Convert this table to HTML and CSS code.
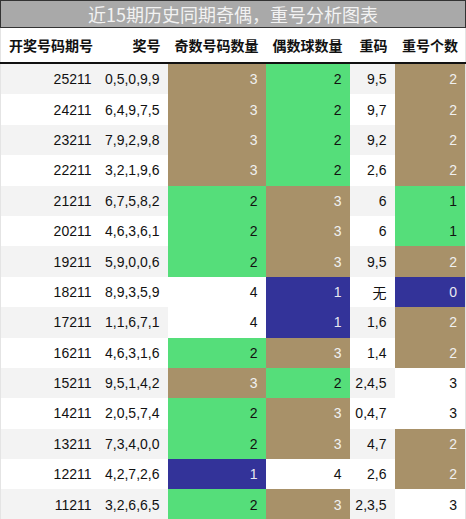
FILE: index.html
```html
<!DOCTYPE html>
<html lang="zh-CN">
<head>
    <meta charset="UTF-8">
    <meta name="viewport" content="width=device-width, initial-scale=1.0">
    <title>近15期历史同期奇偶，重号分析图表</title>
    <link rel="stylesheet" href="styles.css">
</head>
<body>

<div class="title">近15期历史同期奇偶，重号分析图表</div>

<table class="chart">
    <colgroup>
        <col class="c-issue">
        <col class="c-nums">
        <col class="c-odd">
        <col class="c-even">
        <col class="c-rep">
        <col class="c-cnt">
    </colgroup>
    <thead>
        <tr>
            <th>开奖号码期号</th>
            <th>奖号</th>
            <th>奇数号码数量</th>
            <th>偶数球数量</th>
            <th>重码</th>
            <th>重号个数</th>
        </tr>
    </thead>
    <tbody>
        <tr><td>25211</td><td>0,5,0,9,9</td><td class="tan">3</td><td class="green">2</td><td>9,5</td><td class="tan">2</td></tr>
        <tr><td>24211</td><td>6,4,9,7,5</td><td class="tan">3</td><td class="green">2</td><td>9,7</td><td class="tan">2</td></tr>
        <tr><td>23211</td><td>7,9,2,9,8</td><td class="tan">3</td><td class="green">2</td><td>9,2</td><td class="tan">2</td></tr>
        <tr><td>22211</td><td>3,2,1,9,6</td><td class="tan">3</td><td class="green">2</td><td>2,6</td><td class="tan">2</td></tr>
        <tr><td>21211</td><td>6,7,5,8,2</td><td class="green">2</td><td class="tan">3</td><td>6</td><td class="green">1</td></tr>
        <tr><td>20211</td><td>4,6,3,6,1</td><td class="green">2</td><td class="tan">3</td><td>6</td><td class="green">1</td></tr>
        <tr><td>19211</td><td>5,9,0,0,6</td><td class="green">2</td><td class="tan">3</td><td>9,5</td><td class="tan">2</td></tr>
        <tr><td>18211</td><td>8,9,3,5,9</td><td class="plain">4</td><td class="blue">1</td><td>无</td><td class="blue">0</td></tr>
        <tr><td>17211</td><td>1,1,6,7,1</td><td class="plain">4</td><td class="blue">1</td><td>1,6</td><td class="tan">2</td></tr>
        <tr><td>16211</td><td>4,6,3,1,6</td><td class="green">2</td><td class="tan">3</td><td>1,4</td><td class="tan">2</td></tr>
        <tr><td>15211</td><td>9,5,1,4,2</td><td class="tan">3</td><td class="green">2</td><td>2,4,5</td><td class="plain">3</td></tr>
        <tr><td>14211</td><td>2,0,5,7,4</td><td class="green">2</td><td class="tan">3</td><td>0,4,7</td><td class="plain">3</td></tr>
        <tr><td>13211</td><td>7,3,4,0,0</td><td class="green">2</td><td class="tan">3</td><td>4,7</td><td class="tan">2</td></tr>
        <tr><td>12211</td><td>4,2,7,2,6</td><td class="blue">1</td><td class="plain">4</td><td>2,6</td><td class="tan">2</td></tr>
        <tr><td>11211</td><td>3,2,6,6,5</td><td class="green">2</td><td class="tan">3</td><td>2,3,5</td><td class="plain">3</td></tr>
    </tbody>
</table>

</body>
</html>
```

FILE: styles.css
```css
body {
    margin: 0;
    background-color: #ffffff;
    font-family: 'Liberation Sans', 'Noto Sans CJK SC', sans-serif;
    color: #111;
}
.title {
    width: 464px;
    height: 26px;
    line-height: 26px;
    border: 1px solid #333;
    background-color: #a9a9a9;
    color: #f2f2f2;
    font-family: 'Noto Sans CJK SC', sans-serif;
    font-size: 18px;
    text-align: center;
    overflow: hidden;
}
.chart {
    width: 466px;
    border-collapse: collapse;
    table-layout: fixed;
    border-left: 1px solid #e4e4e4;
    border-right: 1px solid #e4e4e4;
}
.c-issue { width: 99px; }
.c-nums { width: 68px; }
.c-odd { width: 98px; }
.c-even { width: 84px; }
.c-rep { width: 45px; }
.c-cnt { width: 71px; }
th {
    height: 34px;
    padding: 0 7px 0 0;
    font-family: 'Noto Sans CJK SC', sans-serif;
    font-size: 14px;
    font-weight: bold;
    text-align: right;
    white-space: nowrap;
    border-bottom: 2px solid #111;
}
th:first-child {
    text-align: left;
    padding-left: 8px;
}
td {
    height: 30.4px;
    padding: 0 8px 0 0;
    font-size: 14px;
    text-align: right;
    white-space: nowrap;
}
tbody tr:nth-child(odd) {
    background-color: #f3f3f3;
}
tbody tr:nth-child(even) {
    background-color: #ffffff;
}
.tan {
    background-color: #a89169;
    color: #f0f0f0;
}
.green {
    background-color: #55de7a;
    color: #111;
}
.blue {
    background-color: #333399;
    color: #e8e8f0;
}
.plain {
    background-color: #ffffff;
}
```
